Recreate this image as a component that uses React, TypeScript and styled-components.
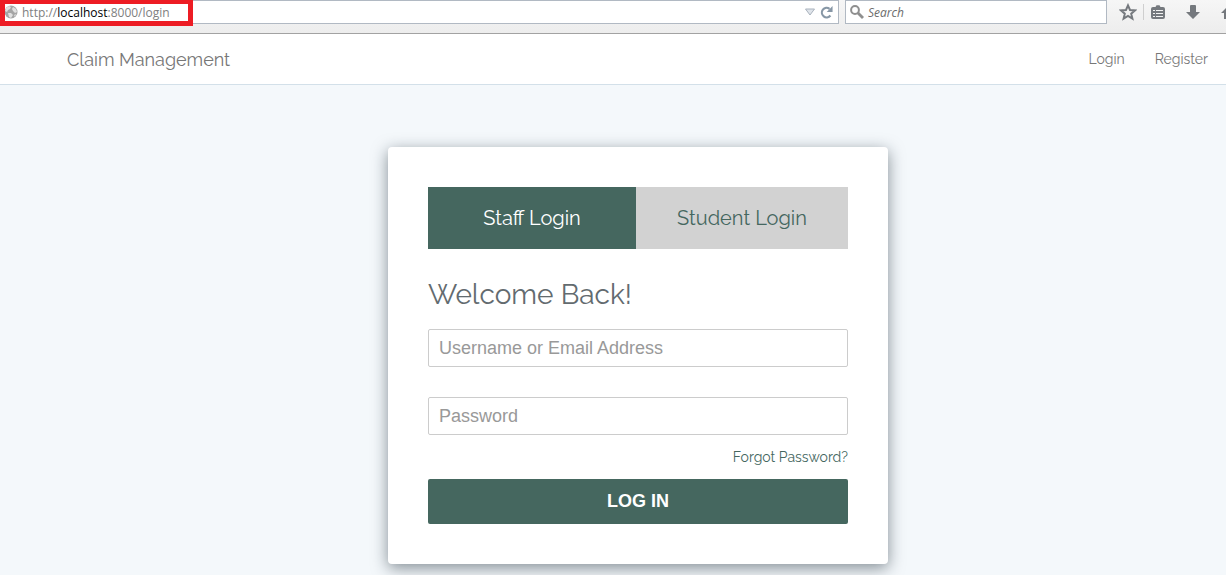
import React from 'react';
import styled, { createGlobalStyle } from 'styled-components';

const GlobalStyle = createGlobalStyle`
  *, *::before, *::after { box-sizing: border-box; }
  body {
    margin: 0;
    background: #f4f8fb;
    color: #636b6f;
    font-family: Raleway, Lato, sans-serif;
    font-size: 14px;
  }
`;

const Page = styled.div`
  display: flex;
  flex-direction: column;
  min-height: 100vh;
`;

const Toolbar = styled.div`
  position: relative;
  display: flex;
  align-items: flex-start;
  height: 34px;
  overflow: hidden;
  background: linear-gradient(#f6f6f6, #ededed);
  border-bottom: 1px solid #a2a2a2;
  font-family: "Segoe UI", "Open Sans", sans-serif;
  font-size: 12px;
`;

const Field = styled.div<{ $grow?: boolean }>`
  display: flex;
  align-items: center;
  gap: 4px;
  height: 24px;
  padding: 0 5px 0 4px;
  background: #fff;
  border: 1px solid #b1b9c3;
  ${(p) => (p.$grow ? 'flex: 1; border-left: 0; margin-right: 6px;' : 'width: 262px;')}
`;

const Address = styled.div`
  flex: 1;
  color: #808080;

  b { color: #000; font-weight: 400; }
`;

const SearchInput = styled.input`
  flex: 1;
  min-width: 0;
  padding: 0;
  border: 0;
  outline: 0;
  background: none;
  font: italic 12px "Segoe UI", "Open Sans", sans-serif;

  &::placeholder { color: #6c6c6c; opacity: 1; }
`;

const IconButton = styled.button`
  display: flex;
  padding: 0;
  border: 0;
  background: none;
`;

const Tools = styled.div`
  display: flex;
  align-items: center;
  width: 119px;
  height: 24px;
  padding-left: 12px;
  overflow: hidden;

  svg { flex: none; }
`;

const Divider = styled.span`
  flex: none;
  width: 1px;
  height: 16px;
  margin: 0 7px 0 6px;
  background: #cfcfcf;
`;

const ToolButton = styled(IconButton)`
  margin-right: 21px;
`;

const Highlight = styled.div`
  position: absolute;
  top: 0;
  left: 0;
  width: 193px;
  height: 26px;
  border: 5px solid #ed1c24;
  border-top-width: 4px;
  pointer-events: none;
`;

const Navbar = styled.header`
  display: flex;
  align-items: center;
  justify-content: space-between;
  height: 51px;
  padding: 0 18px 0 67px;
  background: #fff;
  border-bottom: 1px solid #d3e0e9;
`;

const Brand = styled.a`
  color: #777;
  font-size: 18px;
  text-decoration: none;
`;

const Nav = styled.nav`
  display: flex;
  gap: 30px;
`;

const NavLink = styled.a`
  color: #777;
  text-decoration: none;
`;

const Main = styled.main`
  display: flex;
  flex: 1;
  align-items: flex-start;
  justify-content: center;
  padding: 62px 0 11px 50px;
  overflow: hidden;
`;

const Card = styled.section`
  width: 100%;
  max-width: 500px;
  padding: 40px;
  background: #fff;
  border-radius: 4px;
  box-shadow: 0 4px 16px rgba(19, 35, 47, 0.5);
`;

const Tabs = styled.div`
  display: flex;
  margin-bottom: 26px;
`;

const Tab = styled.button<{ $active?: boolean }>`
  flex: ${(p) => (p.$active ? '208 0 0' : '212 0 0')};
  height: 62px;
  padding: 0;
  border: 0;
  background: ${(p) => (p.$active ? '#45675f' : '#d2d2d2')};
  color: ${(p) => (p.$active ? '#fff' : '#45675f')};
  font-family: inherit;
  font-size: 20px;
`;

const Title = styled.h1`
  margin: 0 0 14px;
  font-size: 28px;
  font-weight: 400;
  line-height: 40px;
`;

const TextInput = styled.input`
  display: block;
  width: 100%;
  height: 38px;
  padding: 0 10px;
  border: 1px solid #ccc;
  border-radius: 2px;
  background: #fff;
  color: #333;
  font: 18px "Liberation Sans", Arial, sans-serif;

  & + & { margin-top: 30px; }
  &::placeholder { color: #999; opacity: 1; }
`;

const Forgot = styled.a`
  display: block;
  margin: 10px 0;
  color: #45675f;
  line-height: 24px;
  text-align: right;
  text-decoration: none;
`;

const Submit = styled.button`
  display: block;
  width: 100%;
  height: 45px;
  border: 0;
  border-radius: 2px;
  background: #45675f;
  color: #fff;
  font: bold 18px "Liberation Sans", Arial, sans-serif;
`;

const GlobeIcon = () => (
  <svg width="14" height="14" viewBox="0 0 14 14" aria-hidden="true">
    <circle cx="7" cy="7" r="6.5" fill="#a5a5a5" />
    <path d="M2 3L5 1L7 2L6 4L4 5L3 7L1 6Z M9 2L12 4L13 7L11 8L9 6L8 4Z M4 8L7 8L9 10L7 13L5 12Z M10 10L12 9L11 12Z" fill="#e0e0e0" />
  </svg>
);

const ReloadIcon = () => (
  <svg width="13" height="13" viewBox="0 0 12 12" aria-hidden="true">
    <path d="M9.6 8.8A4.4 4.4 0 1 1 8.8 2.6" fill="none" stroke="#8797a6" strokeWidth="2" />
    <path d="M11.6 0V5.6H6.2Z" fill="#8797a6" />
  </svg>
);

const SearchIcon = () => (
  <svg width="14" height="14" viewBox="0 0 14 14" aria-hidden="true">
    <circle cx="5" cy="5" r="3.9" fill="none" stroke="#8f8f8f" strokeWidth="2" />
    <path d="M8 8L13 13" stroke="#8f8f8f" strokeWidth="2.8" />
  </svg>
);

const StarIcon = () => (
  <svg width="18" height="18" viewBox="0 0 18 18" aria-hidden="true">
    <path d="M9 2.4L11 7L16 7.4L12.2 10.7L13.4 15.6L9 13L4.6 15.6L5.8 10.7L2 7.4L7 7Z" fill="none" stroke="#75797e" strokeWidth="2" />
  </svg>
);

const ClipboardIcon = () => (
  <svg width="14" height="16" viewBox="0 0 14 16" aria-hidden="true">
    <path d="M2 3H4.5L5.5 1.2H8.5L9.5 3H12Q14 3 14 5V13Q14 15 12 15H2Q0 15 0 13V5Q0 3 2 3Z" fill="#75797e" />
    <path d="M2 6.5H4M5 6.5H12M2 9.5H4M5 9.5H12M2 12.5H4M5 12.5H12" stroke="#f2f2f2" strokeWidth="1" />
  </svg>
);

const DownloadIcon = () => (
  <svg width="14" height="14" viewBox="0 0 14 14" aria-hidden="true">
    <path d="M4 1Q4 0 5 0H9Q10 0 10 1V7H14L7 14L0 7H4Z" fill="#75797e" />
  </svg>
);

const HomeIcon = () => (
  <svg width="16" height="14" viewBox="0 0 16 14" aria-hidden="true">
    <path d="M8 0L16 8H13V14H9V9H7V14H3V8H0Z" fill="#75797e" />
  </svg>
);

export default function App() {
  return (
    <Page>
      <GlobalStyle />
      <Toolbar>
        <Field $grow>
          <GlobeIcon />
          <Address>http://<b>localhost</b>:8000/login</Address>
          <IconButton aria-label="History">
            <svg width="12" height="8" viewBox="0 0 12 8" aria-hidden="true">
              <path d="M1.5 1H10.5L6 7Z" fill="#dfe4ea" stroke="#a9b2bd" />
            </svg>
          </IconButton>
          <IconButton aria-label="Reload"><ReloadIcon /></IconButton>
        </Field>
        <Field>
          <SearchIcon />
          <SearchInput aria-label="Search" placeholder="Search" />
        </Field>
        <Tools>
          <IconButton aria-label="Bookmark"><StarIcon /></IconButton>
          <Divider />
          <ToolButton aria-label="Reading list"><ClipboardIcon /></ToolButton>
          <ToolButton aria-label="Downloads"><DownloadIcon /></ToolButton>
          <IconButton aria-label="Home"><HomeIcon /></IconButton>
        </Tools>
        <Highlight />
      </Toolbar>
      <Navbar>
        <Brand href="#">Claim Management</Brand>
        <Nav>
          <NavLink href="#login">Login</NavLink>
          <NavLink href="#register">Register</NavLink>
        </Nav>
      </Navbar>
      <Main>
        <Card>
          <Tabs>
            <Tab type="button" $active>Staff Login</Tab>
            <Tab type="button">Student Login</Tab>
          </Tabs>
          <form onSubmit={(e) => e.preventDefault()}>
            <Title>Welcome Back!</Title>
            <TextInput type="text" aria-label="Username or Email Address" placeholder="Username or Email Address" />
            <TextInput type="password" aria-label="Password" placeholder="Password" />
            <Forgot href="#forgot">Forgot Password?</Forgot>
            <Submit type="submit">LOG IN</Submit>
          </form>
        </Card>
      </Main>
    </Page>
  );
}
